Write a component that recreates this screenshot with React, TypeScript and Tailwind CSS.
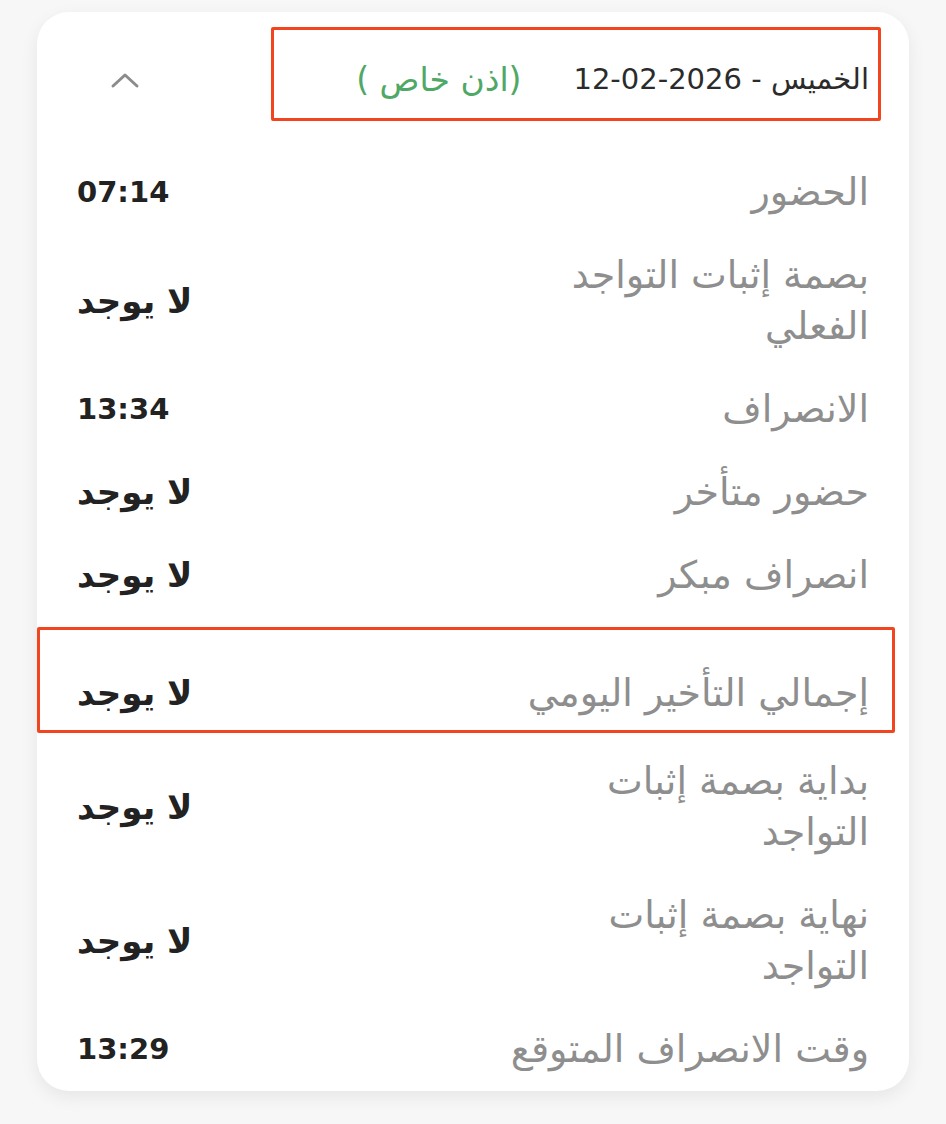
import React from 'react';

type Row = {
  label: string[];
  value: string;
  highlight?: boolean;
};

const rows: Row[] = [
  { label: ['الحضور'], value: '07:14' },
  { label: ['بصمة إثبات التواجد', 'الفعلي'], value: 'لا يوجد' },
  { label: ['الانصراف'], value: '13:34' },
  { label: ['حضور متأخر'], value: 'لا يوجد' },
  { label: ['انصراف مبكر'], value: 'لا يوجد' },
  { label: ['إجمالي التأخير اليومي'], value: 'لا يوجد', highlight: true },
  { label: ['بداية بصمة إثبات', 'التواجد'], value: 'لا يوجد' },
  { label: ['نهاية بصمة إثبات', 'التواجد'], value: 'لا يوجد' },
  { label: ['وقت الانصراف المتوقع'], value: '13:29' },
];

const ChevronUp = () => (
  <svg width="30" height="18" viewBox="0 0 30 18" fill="none">
    <polyline points="3,15 15,4 27,15" stroke="#8c8c8c" strokeWidth="3" strokeLinecap="round" strokeLinejoin="round" />
  </svg>
);

export default function App() {
  return (
    <div dir="rtl" className="min-h-[1124px] bg-[#f7f7f7] pt-[12px] px-[37px] font-['DejaVu_Sans',sans-serif]">
      <div className="bg-white rounded-[32px] shadow-[0_6px_18px_rgba(0,0,0,0.07)] pt-[15px] pb-0 pl-[40px] pr-[40px]">
        {/* day header */}
        <div className="flex items-center justify-between -mr-[12px]">
          <div className="flex items-center gap-[52px] w-[610px] h-[94px] border-[3px] border-[#f2451f] rounded-[2px] pr-[9px] pt-[12px]">
            <span className="text-[29px] text-[#2b2b2b] whitespace-nowrap">
              الخميس - <span dir="ltr">12-02-2026</span>
            </span>
            <span className="text-[33px] text-[#4fa865] whitespace-nowrap">(اذن خاص )</span>
          </div>
          <div className="ml-[33px] pt-[12px] flex items-center">
            <ChevronUp />
          </div>
        </div>

        {/* attendance rows */}
        <div className="mt-[30px]">
          {rows.map((row, i) => {
            const isTime = row.value.includes(':');
            return (
              <div
                key={i}
                className={
                  row.highlight
                    ? 'flex items-center justify-between -ml-[40px] -mr-[26px] pl-[37px] pr-[23px] pt-[37.5px] pb-[11.5px] mt-[10px] mb-[7px] border-[3px] border-[#f2451f] rounded-[2px]'
                    : 'flex items-center justify-between py-[16px]'
                }
              >
                <div className="text-[38px] leading-[51px] text-[#8e8e8e] whitespace-nowrap">
                  {row.label.map((l, j) => (
                    <div key={j}>{l}</div>
                  ))}
                </div>
                <div
                  dir={isTime ? 'ltr' : 'rtl'}
                  className={
                    isTime
                      ? 'text-[29px] font-bold text-[#222] whitespace-nowrap'
                      : 'text-[34px] font-bold text-[#222] whitespace-nowrap'
                  }
                >
                  {row.value}
                </div>
              </div>
            );
          })}
        </div>
      </div>
    </div>
  );
}
